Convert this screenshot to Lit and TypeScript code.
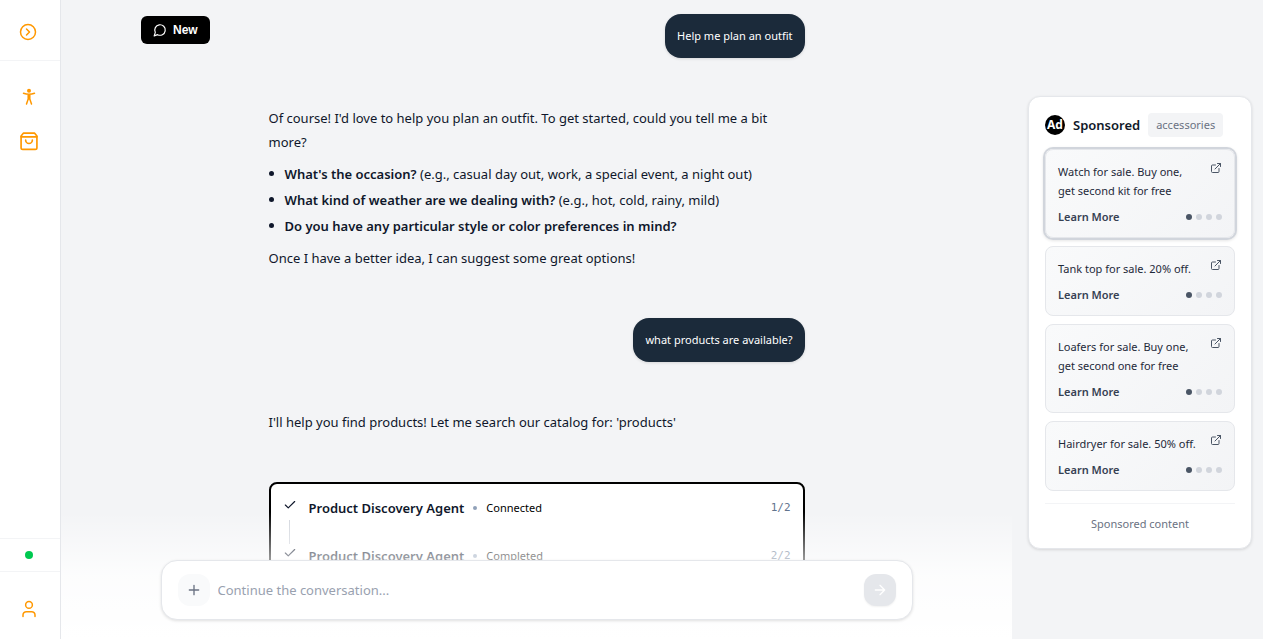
import { LitElement, html, css, svg, nothing } from "lit";
import { customElement, property } from "lit/decorators.js";

interface Ad {
  text: string;
  active?: boolean;
}

const ADS: Ad[] = [
  { text: "Watch for sale. Buy one, get second kit for free", active: true },
  { text: "Tank top for sale. 20% off." },
  { text: "Loafers for sale. Buy one, get second one for free" },
  { text: "Hairdryer for sale. 50% off." },
];

const STEPS = [
  { agent: "Product Discovery Agent", status: "Connected" },
  { agent: "Product Discovery Agent", status: "Completed" },
];

const QUESTIONS = [
  { q: "What's the occasion?", hint: "(e.g., casual day out, work, a special event, a night out)" },
  { q: "What kind of weather are we dealing with?", hint: "(e.g., hot, cold, rainy, mild)" },
  { q: "Do you have any particular style or color preferences in mind?", hint: "" },
];

const PATHS = {
  expand: svg`<circle cx="12" cy="12" r="10"/><path d="m10 8 4 4-4 4"/>`,
  bag: svg`<path d="M5.2 2.6h13.6L21.5 6v14a2 2 0 0 1-2 2h-15a2 2 0 0 1-2-2V6z"/><path d="M2.5 7h19"/><path d="M16 11a4 4 0 0 1-8 0"/>`,
  user: svg`<path d="M20 22v-2a4.500 4.500 0 0 0-4.500-4.500h-7A4.500 4.500 0 0 0 4 20v2"/><circle cx="12" cy="6.500" r="4.500"/>`,
  chat: svg`<path d="M7.9 20A9 9 0 1 0 4 16.100L2 22Z"/>`,
  check: svg`<path d="M20 6 9 17l-5-5"/>`,
  plus: svg`<path d="M5 12h14M12 5v14"/>`,
  arrow: svg`<path d="M5 12h14M12 5l7 7-7 7"/>`,
  external: svg`<path d="M15 3h6v6M10 14 21 3M18 13v6a2 2 0 0 1-2 2H5a2 2 0 0 1-2-2V8a2 2 0 0 1 2-2h6"/>`,
};

const icon = (name: keyof typeof PATHS, size: number, stroke = 2) => html`<svg
  width=${size} height=${size} viewBox="0 0 24 24" fill="none" stroke="currentColor"
  stroke-width=${stroke} stroke-linecap="round" stroke-linejoin="round" aria-hidden="true">${PATHS[name]}</svg>`;

const base = css`
  * { box-sizing: border-box; margin: 0; }
  svg { display: block; flex: none; }
  button { font: inherit; color: inherit; border: 0; padding: 0; background: none; cursor: pointer; }
  a { color: inherit; text-decoration: none; }
`;

@customElement("side-rail")
export class SideRail extends LitElement {
  static styles = [base, css`
    :host { display: flex; flex-direction: column; width: 61px; background: #fff; border-right: 1px solid #e5e7eb; color: #ff9800; }
    button { display: grid; place-items: center; }
    .top { display: grid; place-items: center; height: 61px; padding: 4px 4px 0 0; border-bottom: 1px solid #f3f4f6; }
    .nav { flex: 1; display: flex; flex-direction: column; align-items: center; gap: 4px; padding: 16px 2px 0 0; }
    .nav button { width: 40px; height: 40px; }
    .status { display: grid; place-items: center; height: 34px; padding-right: 2px; border: solid #f3f4f6; border-width: 1px 0; }
    .dot { width: 8px; height: 8px; border-radius: 50%; background: #00c950; }
    .account { display: grid; place-items: center; height: 67px; padding: 6px 2px 0 0; }
  `];
  render() {
    return html`
      <div class="top"><button aria-label="Expand sidebar">${icon("expand", 18)}</button></div>
      <nav class="nav">
        <button aria-label="Accessibility">
          <svg width="16" height="18" viewBox="0 0 16 18" fill="none" stroke="currentColor" stroke-width="1.500" stroke-linecap="round" stroke-linejoin="round" aria-hidden="true">
            <circle cx="8" cy="2.700" r="2" fill="currentColor" stroke="none"/>
            <path d="M2.500 5.200Q8 7.400 13.500 5.200M8 6.500v4.500M7.200 6.600v4.400L5.500 16M8.800 6.600v4.400l1.700 5"/>
          </svg>
        </button>
        <button aria-label="Shop">${icon("bag", 20)}</button>
      </nav>
      <div class="status"><span class="dot" role="img" aria-label="Online"></span></div>
      <div class="account"><button aria-label="Account">${icon("user", 18)}</button></div>
    `;
  }
}

@customElement("chat-thread")
export class ChatThread extends LitElement {
  static styles = [base, css`
    :host { display: flex; flex-direction: column; gap: 48px; padding-top: 14px; color: #0f172b; font-size: 13px; line-height: 24px; }
    .user { align-self: flex-end; padding: 12px; border-radius: 16px; background: #1b2a3a; color: #fff; font-size: 11px; line-height: 20px; box-shadow: 0 1px 3px rgba(0, 0, 0, 0.12); }
    .reply { display: flex; flex-direction: column; gap: 8px; }
    ul { display: flex; flex-direction: column; gap: 2px; list-style: none; padding: 0; }
    li { display: flex; gap: 11px; }
    li::before { content: ""; flex: none; width: 5px; height: 5px; margin-top: 9px; border-radius: 50%; background: #0f172b; }
    strong { font-weight: 600; }
    .steps { border: 2px solid #000; border-radius: 8px; background: #fff; padding: 12px; }
    .step { display: grid; grid-template-columns: 14px 1fr auto; column-gap: 12px; height: 48px; }
    .mark { display: flex; flex-direction: column; align-items: center; gap: 8px; padding-top: 2px; }
    .line { width: 1px; height: 24px; background: #d1d5dc; }
    .info { display: flex; align-items: center; gap: 9px; height: 24px; }
    .agent { font-weight: 600; }
    .bullet { width: 4px; height: 4px; border-radius: 50%; background: #90a1b9; }
    .state { font-size: 11px; color: #000; }
    .count { font: 11px/24px "DejaVu Sans Mono", monospace; color: #62748e; }
  `];
  render() {
    return html`
      <div class="user">Help me plan an outfit</div>
      <div class="reply">
        <p>Of course! I'd love to help you plan an outfit. To get started, could you tell me a bit more?</p>
        <ul>${QUESTIONS.map((i) => html`<li><span><strong>${i.q}</strong> ${i.hint}</span></li>`)}</ul>
        <p>Once I have a better idea, I can suggest some great options!</p>
      </div>
      <div class="user">what products are available?</div>
      <div class="reply"><p>I'll help you find products! Let me search our catalog for: 'products'</p></div>
      <div class="steps">
        ${STEPS.map((s, i) => html`<div class="step">
          <div class="mark">${icon("check", 14)}${i < STEPS.length - 1 ? html`<span class="line"></span>` : nothing}</div>
          <div class="info"><span class="agent">${s.agent}</span><span class="bullet"></span><span class="state">${s.status}</span></div>
          <span class="count">${i + 1}/${STEPS.length}</span>
        </div>`)}
      </div>
    `;
  }
}

@customElement("chat-composer")
export class ChatComposer extends LitElement {
  static styles = [base, css`
    :host { display: block; padding: 48px 20px 19px; background: linear-gradient(to top, #fff, rgba(255, 255, 255, 0.8) 50%, rgba(255, 255, 255, 0)); }
    .box { display: flex; align-items: center; gap: 8px; max-width: 752px; height: 60px; margin: 0 auto; padding: 0 16px; background: #fff; border: 1px solid #e5e7eb; border-radius: 16px; box-shadow: 0 1px 3px rgba(0, 0, 0, 0.12); }
    button { display: grid; place-items: center; width: 32px; height: 32px; border-radius: 12px; flex: none; }
    .add { background: #f9fafb; color: #6a7282; }
    .send { background: #e5e7eb; color: #fff; box-shadow: 0 1px 2px rgba(0, 0, 0, 0.06); }
    input { flex: 1; min-width: 0; border: 0; outline: 0; padding: 0; background: none; font: inherit; font-size: 13px; line-height: 24px; color: #0f172b; }
    input::placeholder { color: #99a1af; opacity: 1; }
  `];
  render() {
    return html`<form class="box" @submit=${(e: Event) => e.preventDefault()}>
      <button class="add" type="button" aria-label="Add attachment">${icon("plus", 16)}</button>
      <input type="text" aria-label="Message" placeholder="Continue the conversation..." />
      <button class="send" type="submit" aria-label="Send">${icon("arrow", 16)}</button>
    </form>`;
  }
}

@customElement("ad-card")
export class AdCard extends LitElement {
  @property() text = "";
  @property({ type: Boolean, reflect: true }) active = false;
  static styles = [base, css`
    :host { display: block; padding: 12px; border: 1px solid #e5e7eb; border-radius: 8px; background: linear-gradient(135deg, #f9fafb, #f3f4f6); color: #1e2939; font-size: 11px; line-height: 19px; }
    :host([active]) { border-color: #e5e7eb; box-shadow: 0 0 0 2px #d1d5dc, 0 1px 3px 2px rgba(0, 0, 0, 0.1); }
    .row { display: flex; justify-content: space-between; gap: 8px; }
    .text { min-width: 0; flex: 1; }
    .row svg { color: #4a5565; }
    .foot { display: flex; justify-content: space-between; align-items: center; height: 17px; margin-top: 8px; line-height: 17px; }
    .more { font-weight: 600; color: #364153; }
    .dots { display: flex; gap: 4px; }
    .dots span { width: 6px; height: 6px; border-radius: 50%; background: #d1d5dc; }
    .dots span:first-child { background: #4a5565; }
  `];
  render() {
    return html`
      <div class="row"><p class="text">${this.text}</p>${icon("external", 12)}</div>
      <div class="foot"><a class="more" href="#">Learn More</a><div class="dots"><span></span><span></span><span></span><span></span></div></div>
    `;
  }
}

@customElement("ad-panel")
export class AdPanel extends LitElement {
  static styles = [base, css`
    :host { display: block; padding: 16px; background: #fff; border: 1px solid #e5e7eb; border-radius: 12px; box-shadow: 0 1px 3px rgba(0, 0, 0, 0.12); }
    .head { display: flex; align-items: center; gap: 8px; height: 24px; margin-bottom: 12px; }
    .logo { display: grid; place-items: center; width: 20px; height: 20px; border-radius: 50%; background: #000; color: #fff; font-size: 12px; font-weight: 700; line-height: 20px; }
    h2 { font-size: 13px; font-weight: 600; line-height: 24px; color: #101828; }
    .tag { padding: 0 8px; border-radius: 4px; background: #f3f4f6; color: #6a7282; font-size: 11px; line-height: 24px; }
    .list { display: flex; flex-direction: column; gap: 8px; }
    .foot { margin-top: 12px; padding-top: 12px; border-top: 1px solid #f3f4f6; text-align: center; color: #6a7282; font-size: 11px; line-height: 16px; }
  `];
  render() {
    return html`
      <div class="head"><span class="logo">Ad</span><h2>Sponsored</h2><span class="tag">accessories</span></div>
      <div class="list">${ADS.map((a) => html`<ad-card .text=${a.text} ?active=${!!a.active}></ad-card>`)}</div>
      <p class="foot">Sponsored content</p>
    `;
  }
}

@customElement("app-root")
export class AppRoot extends LitElement {
  static styles = [base, css`
    :host { display: grid; grid-template-columns: auto 1fr 251px; grid-template-rows: 100%; height: 100vh; overflow: hidden; background: #f3f4f6; font-family: "Segoe UI", "Noto Sans", sans-serif; }
    main { position: relative; min-width: 0; overflow: hidden; }
    chat-thread { max-width: 536px; margin: 0 auto; }
    .new { position: absolute; top: 16px; left: 80px; display: flex; align-items: center; gap: 6px; height: 28px; padding: 0 12px; border-radius: 6px; background: #000; color: #fff; font: 700 12px/16px "Liberation Sans", sans-serif; }
    chat-composer { position: absolute; left: 0; right: 0; bottom: 0; }
    aside { padding: 96px 11px 0 16px; }
  `];
  render() {
    return html`
      <side-rail></side-rail>
      <main>
        <chat-thread></chat-thread>
        <button class="new">${icon("chat", 14)}New</button>
        <chat-composer></chat-composer>
      </main>
      <aside><ad-panel></ad-panel></aside>
    `;
  }
}
